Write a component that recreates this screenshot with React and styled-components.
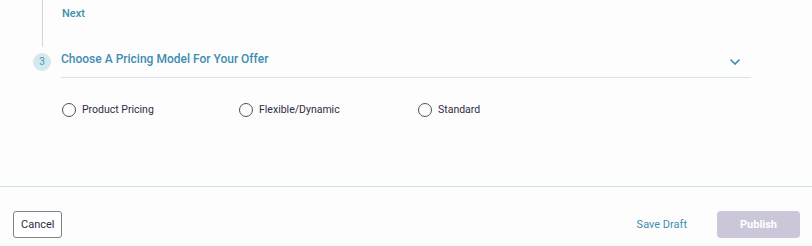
import React from "react";
import styled, { createGlobalStyle } from "styled-components";

const GlobalStyle = createGlobalStyle`
  html, body {
    margin: 0;
    padding: 0;
    background: #fdfdfd;
    font-family: Roboto, "Liberation Sans", Arial, sans-serif;
  }
`;

const Page = styled.div`
  width: 812px;
  height: 246px;
  display: flex;
  flex-direction: column;
  background: #fdfdfd;
`;

const Body = styled.div`
  height: 186px;
`;

const StepRail = styled.div`
  margin-left: 42px;
  height: 47px;
  border-left: 1px solid #d3d6d8;
  padding-left: 19px;
  box-sizing: border-box;
`;

const NextLink = styled.span`
  display: block;
  padding-top: 7px;
  font-size: 11px;
  line-height: 14px;
  font-weight: 500;
  color: #3e8db3;
`;

const StepHeader = styled.div`
  display: flex;
  align-items: flex-start;
  margin-left: 33px;
  width: 718px;
  gap: 10px;
`;

const StepNumber = styled.div`
  flex: none;
  width: 18px;
  height: 18px;
  margin-top: 6px;
  border-radius: 50%;
  background: #d4e9ee;
  color: #4b93b3;
  font-size: 10px;
  line-height: 18px;
  text-align: center;
`;

const StepTitleBar = styled.div`
  flex: 1;
  display: flex;
  align-items: center;
  justify-content: space-between;
  padding: 4px 10px 10px 0;
  border-bottom: 1px solid #d3e4ea;
`;

const StepTitle = styled.span`
  font-size: 12px;
  line-height: 16px;
  font-weight: 500;
  color: #3f8db2;
`;

const Chevron = styled.svg`
  width: 12px;
  height: 8px;
  margin-top: 6px;
`;

const Options = styled.div`
  display: flex;
  margin: 24px 0 0 62px;
`;

const Option = styled.label`
  display: flex;
  align-items: center;
  gap: 6px;
  width: ${(p) => p.$width}px;
  font-size: 10.5px;
  line-height: 16px;
  color: #2e2c45;
  cursor: pointer;
`;

const RadioCircle = styled.span`
  width: 12px;
  height: 12px;
  border: 1.3px solid #4b5357;
  border-radius: 50%;
  box-sizing: content-box;
`;

const Footer = styled.div`
  height: 60px;
  border-top: 1px solid #c9e6ee;
  display: flex;
  align-items: flex-start;
  padding: 24px 12px 0 13px;
  box-sizing: border-box;
`;

const CancelButton = styled.button`
  height: 27px;
  padding: 0 7px;
  border: 1px solid #7b8486;
  border-radius: 3px;
  background: #fff;
  color: #2e2c45;
  font-family: inherit;
  font-size: 11px;
`;

const Spacer = styled.div`
  flex: 1;
`;

const SaveDraft = styled.button`
  height: 27px;
  border: none;
  background: none;
  padding: 0;
  margin-right: 30px;
  color: #3e8db3;
  font-family: inherit;
  font-size: 11px;
  font-weight: 400;
`;

const PublishButton = styled.button`
  width: 83px;
  height: 27px;
  border: none;
  border-radius: 4px;
  background: #cbc7d9;
  color: #fff;
  font-family: inherit;
  font-size: 11px;
  font-weight: 700;
`;

const options = [
  { label: "Product Pricing", width: 177 },
  { label: "Flexible/Dynamic", width: 179 },
  { label: "Standard", width: 120 },
];

export default function App() {
  return (
    <Page>
      <GlobalStyle />
      <Body>
        <StepRail>
          <NextLink>Next</NextLink>
        </StepRail>
        <StepHeader>
          <StepNumber>3</StepNumber>
          <StepTitleBar>
            <StepTitle>Choose A Pricing Model For Your Offer</StepTitle>
            <Chevron viewBox="0 0 12 8">
              <path d="M1.5 1.5 6 6l4.5-4.5" fill="none" stroke="#3e8db3" strokeWidth="1.6" />
            </Chevron>
          </StepTitleBar>
        </StepHeader>
        <Options>
          {options.map((o) => (
            <Option key={o.label} $width={o.width}>
              <RadioCircle />
              {o.label}
            </Option>
          ))}
        </Options>
      </Body>
      <Footer>
        <CancelButton>Cancel</CancelButton>
        <Spacer />
        <SaveDraft>Save Draft</SaveDraft>
        <PublishButton>Publish</PublishButton>
      </Footer>
    </Page>
  );
}
